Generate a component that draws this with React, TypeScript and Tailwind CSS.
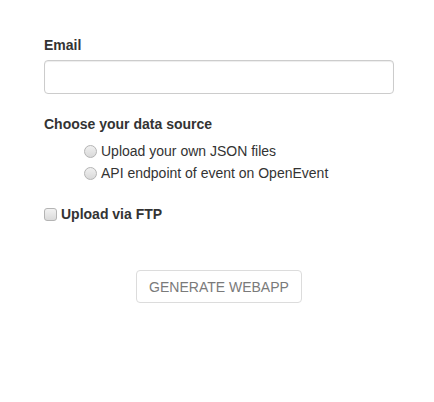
import React from 'react';

const Radio = () => (
  <span className="inline-block w-[13px] h-[13px] rounded-full border border-[#b4b4b4] bg-[linear-gradient(#f0f0f0,#d9d9d9)] shrink-0" />
);

const App = () => {
  return (
    <main className="w-[434px] h-[402px] bg-white text-[#333] font-['Liberation_Sans',Arial,sans-serif] text-[14px] leading-[20px]">
      <div className="pl-[44px] pr-[40px] pt-[35px]">
        {/* email */}
        <label className="block font-bold mb-[5px]">Email</label>
        <input
          type="email"
          className="block w-[350px] h-[34px] rounded-[4px] border border-[#ccc] px-3 outline-none shadow-[inset_0_1px_1px_rgba(0,0,0,0.075)]"
        />

        {/* data source */}
        <div className="mt-[20px] font-bold">Choose your data source</div>
        <div className="mt-[6px] pl-[40px] flex flex-col">
          <div className="h-[22px] flex items-center gap-[4px]">
            <Radio />
            <span>Upload your own JSON files</span>
          </div>
          <div className="h-[22px] flex items-center gap-[4px]">
            <Radio />
            <span>API endpoint of event on OpenEvent</span>
          </div>
        </div>

        {/* ftp */}
        <div className="mt-[20px] h-[20px] flex items-center gap-[4px] font-bold">
          <span className="inline-block w-[13px] h-[13px] rounded-[3px] border border-[#b4b4b4] bg-[linear-gradient(#f2f2f2,#dadada)] shrink-0" />
          <span>Upload via FTP</span>
        </div>

        <div className="w-[350px] flex justify-center mt-[46px]">
          <button
            disabled
            className="h-[33px] px-[12px] rounded-[4px] border border-[#dcdcdc] bg-white text-[#7a7a7a] uppercase"
          >
            Generate WebApp
          </button>
        </div>
      </div>
    </main>
  );
};

export default App;
